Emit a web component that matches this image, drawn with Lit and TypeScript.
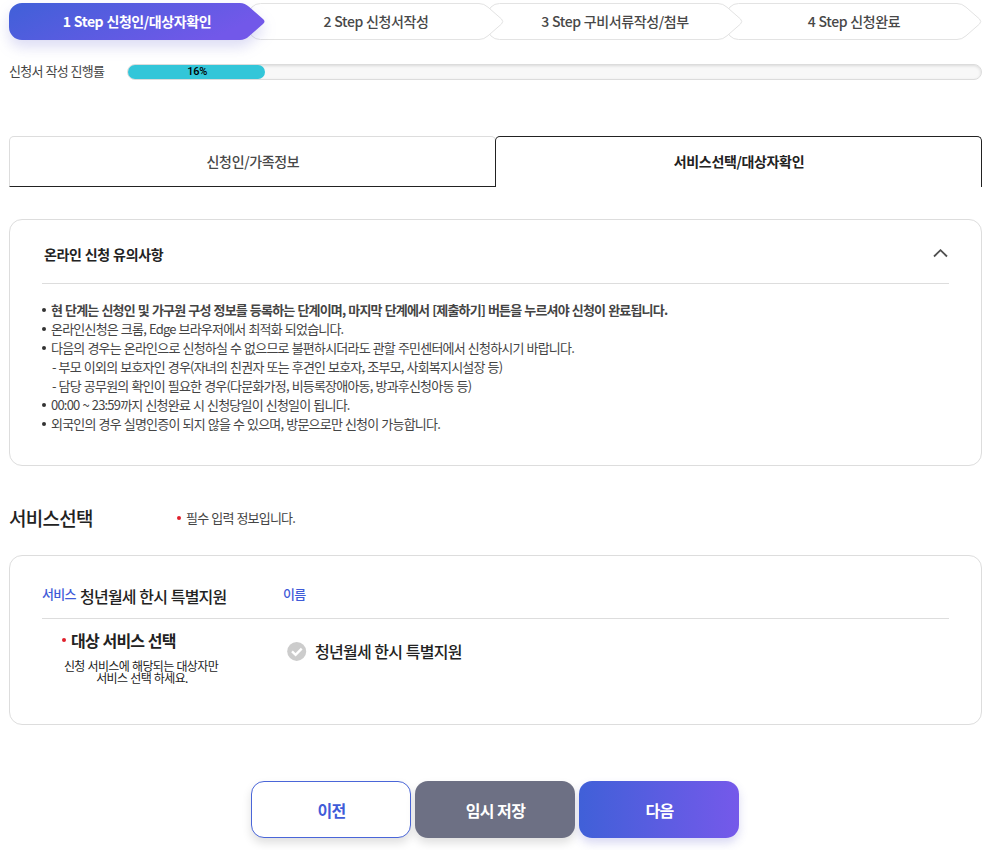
import { LitElement, html, css } from "lit";
import { customElement } from "lit/decorators.js";

interface Notice { text: string; kind?: "strong" | "sub"; }

const STEPS = ["1 Step 신청인/대상자확인", "2 Step 신청서작성", "3 Step 구비서류작성/첨부", "4 Step 신청완료"];

const NOTICES: Notice[] = [
  { text: "현 단계는 신청인 및 가구원 구성 정보를 등록하는 단계이며, 마지막 단계에서 [제출하기] 버튼을 누르셔야 신청이 완료됩니다.", kind: "strong" },
  { text: "온라인신청은 크롬, Edge 브라우저에서 최적화 되었습니다." },
  { text: "다음의 경우는 온라인으로 신청하실 수 없으므로 불편하시더라도 관할 주민센터에서 신청하시기 바랍니다." },
  { text: "- 부모 이외의 보호자인 경우(자녀의 친권자 또는 후견인 보호자, 조부모, 사회복지시설장 등)", kind: "sub" },
  { text: "- 담당 공무원의 확인이 필요한 경우(다문화가정, 비등록장애아동, 방과후신청아동 등)", kind: "sub" },
  { text: "00:00 ~ 23:59까지 신청완료 시 신청당일이 신청일이 됩니다." },
  { text: "외국인의 경우 실명인증이 되지 않을 수 있으며, 방문으로만 신청이 가능합니다." },
];

const STEP_OUTLINE = "M12.5 .5H231Q236 .5 240 4.2L253.5 16Q256 18.5 253.5 21L240 32.8Q236 36.5 231 36.5H12.5A12 12 0 0 1 .5 24.5V12.5A12 12 0 0 1 12.5 .5Z";
const STEP_SOLID = "M13 0H231Q236 0 240 3.8L254 16Q257 18.5 254 21L240 33.2Q236 37 231 37H13A13 13 0 0 1 0 24V13A13 13 0 0 1 13 0Z";

@customElement("app-root")
export class AppRoot extends LitElement {
  static styles = css`
    :host { display: block; box-sizing: border-box; height: 850px; overflow: hidden; padding: 3px 14px 0 9px; background: #fff; color: #222;
      font-family: "Noto Sans CJK KR", "Noto Sans", sans-serif; font-size: 13px; letter-spacing: -0.8px; word-spacing: 0.8px; }
    * { box-sizing: border-box; }
    .steps { display: flex; height: 37px; }
    .step { position: relative; width: 256px; flex: none; display: grid; place-items: center; font-size: 14px; font-weight: 500; letter-spacing: -0.4px; word-spacing: 0.4px; color: #484848; }
    .step + .step { margin-left: -17px; }
    .step:nth-child(1) { z-index: 4; }
    .step:nth-child(2) { z-index: 3; }
    .step:nth-child(3) { z-index: 2; }
    .step svg { grid-area: 1/1; width: 256px; height: 37px; overflow: visible; fill: #fff; stroke: #e3e3e3; }
    .step span { grid-area: 1/1; z-index: 1; line-height: 20px; padding-bottom: 2px; }
    .step.on { color: #fff; font-weight: 700; }
    .step.on svg { stroke: none; filter: drop-shadow(0 7px 7px rgba(80, 80, 200, .2)); }
    .progress { display: flex; align-items: center; height: 16px; margin-top: 24px; }
    .progress .label { width: 118px; color: #444; line-height: 16px; padding-bottom: 2px; letter-spacing: -0.7px; word-spacing: 0.4px; }
    .bar { flex: 1; height: 16px; border: 1px solid #dcdcdc; border-radius: 8px; background: #f8f8f8; box-shadow: inset 0 1px 3px rgba(0,0,0,.12); }
    .fill { height: 14px; border-radius: 7px; background: #33c6d9; color: #000; text-align: center; font: 500 11px/14px Roboto, sans-serif; letter-spacing: -0.2px; padding-left: 1px; }
    .tabs { display: flex; margin-top: 56px; height: 51px; }
    .tab { width: 487px; display: grid; place-items: center; border: 1px solid #ddd; border-bottom-color: #222; border-radius: 5px 5px 0 0; font-size: 14px; letter-spacing: -0.35px; font-weight: 500; color: #484848; padding: 0 0 2px 1px; }
    .tab.on { margin-left: -1px; border-color: #222; border-bottom: 0; font-weight: 700; color: #222; padding-bottom: 3px; }
    .card { border: 1px solid #ddd; border-radius: 13px; padding: 0 32px; }
    .notice { margin-top: 32px; height: 247px; }
    .head { height: 64px; display: flex; align-items: center; justify-content: space-between; border-bottom: 1px solid #ddd; padding: 4px 1px 0 2px; font-size: 14px; font-weight: 700; letter-spacing: -0.35px; word-spacing: 0.4px; }
    .head svg { width: 15px; height: 9px; fill: none; stroke: #505050; stroke-width: 1.8; }
    ul { list-style: none; margin: 16px 0 0; padding: 0; color: #444; }
    li { height: 19px; line-height: 19px; display: flex; align-items: center; white-space: nowrap; }
    li.sub { padding-left: 10px; }
    li.strong { font-weight: 700; letter-spacing: -0.815px; }
    .dot { width: 4px; height: 4px; border-radius: 50%; background: #333; margin-right: 5px; flex: none; }
    .dot.red { background: #e0202c; }
    .section { height: 89px; display: flex; align-items: center; padding-top: 14px; }
    h2 { margin: 0; width: 168px; font-size: 19px; font-weight: 500; letter-spacing: -0.75px; }
    .req { display: flex; align-items: center; color: #444; letter-spacing: -0.8px; }
    .service { height: 170px; }
    .row { display: flex; height: 63px; border-bottom: 1px solid #ddd; padding-top: 16px; align-items: center; }
    .row .col { width: 241px; display: flex; align-items: center; gap: 4px; }
    .blue { color: #3f5bd8; font-weight: 500; letter-spacing: -0.65px; padding-bottom: 4px; }
    .name { font-size: 16px; font-weight: 500; letter-spacing: -0.75px; word-spacing: 0.6px; line-height: 24px; }
    .row .name { padding-top: 1px; }
    .body { display: flex; }
    .left { width: 198px; margin-right: 47px; }
    .target { display: flex; align-items: center; padding-left: 20px; font-size: 16px; font-weight: 700; letter-spacing: -0.8px; line-height: 24px; margin-top: 9px; }
    .hint { margin-top: 8px; font-size: 12px; line-height: 12px; letter-spacing: -0.62px; word-spacing: 0.7px; text-align: center; }
    .hint div + div { padding-left: 2px; }
    .pick { display: flex; align-items: center; height: 24px; margin-top: 20px; gap: 8px; }
    .pick svg { width: 20px; height: 20px; }
    .buttons { display: flex; justify-content: center; gap: 4px; margin: 56px 2px 0 0; }
    button { width: 160px; height: 57px; border: 0; border-radius: 13px; font: 700 16px/24px "Noto Sans CJK KR", sans-serif; letter-spacing: -0.6px; color: #fff; padding: 0 0 0 2px; background: #6d7084; box-shadow: 0 5px 10px rgba(0,0,0,.13); }
    .prev { background: #fff; color: #3f5bd8; border: 1px solid #4a66d8; }
    .next { background: linear-gradient(90deg, #4060d8, #7559ea); box-shadow: 0 5px 10px rgba(80,80,200,.22); }
  `;

  private step(label: string, active: boolean) {
    return html`<div class="step ${active ? "on" : ""}">
      <svg viewBox="0 0 256 37">
        <defs><linearGradient id="g" x1="0" y1="0" x2="1" y2=".3"><stop offset="0" stop-color="#4060d8"/><stop offset="1" stop-color="#7258e9"/></linearGradient></defs>
        <path fill=${active ? "url(#g)" : "#fff"} d=${active ? STEP_SOLID : STEP_OUTLINE}/>
      </svg>
      <span>${label}</span></div>`;
  }

  render() {
    return html`
      <div class="steps">${STEPS.map((s, i) => this.step(s, i === 0))}</div>
      <div class="progress"><div class="label">신청서 작성 진행률</div><div class="bar"><div class="fill" style="width:16.1%">16%</div></div></div>
      <div class="tabs"><div class="tab">신청인/가족정보</div><div class="tab on">서비스선택/대상자확인</div></div>
      <section class="card notice">
        <div class="head"><span>온라인 신청 유의사항</span><svg viewBox="0 0 15 9"><path d="M1 7.5 7.5 1.2 14 7.5"/></svg></div>
        <ul>${NOTICES.map((n) => html`<li class=${n.kind ?? ""}>${n.kind === "sub" ? "" : html`<i class="dot"></i>`}<span>${n.text}</span></li>`)}</ul>
      </section>
      <div class="section"><h2>서비스선택</h2><div class="req"><i class="dot red"></i><span>필수 입력 정보입니다.</span></div></div>
      <section class="card service">
        <div class="row"><div class="col"><span class="blue">서비스</span><span class="name">청년월세 한시 특별지원</span></div><span class="blue">이름</span></div>
        <div class="body">
          <div class="left">
            <div class="target"><i class="dot red"></i><span>대상 서비스 선택</span></div>
            <div class="hint"><div>신청 서비스에 해당되는 대상자만</div><div>서비스 선택 하세요.</div></div>
          </div>
          <div class="pick"><svg viewBox="0 0 20 20"><circle cx="9.7" cy="10.4" r="9.5" fill="#ccc"/><path d="M5 10.4 8.6 13.8 14.7 7.7" fill="none" stroke="#fff" stroke-width="2.4"/></svg><span class="name">청년월세 한시 특별지원</span></div>
        </div>
      </section>
      <div class="buttons"><button class="prev">이전</button><button>임시 저장</button><button class="next">다음</button></div>`;
  }
}
